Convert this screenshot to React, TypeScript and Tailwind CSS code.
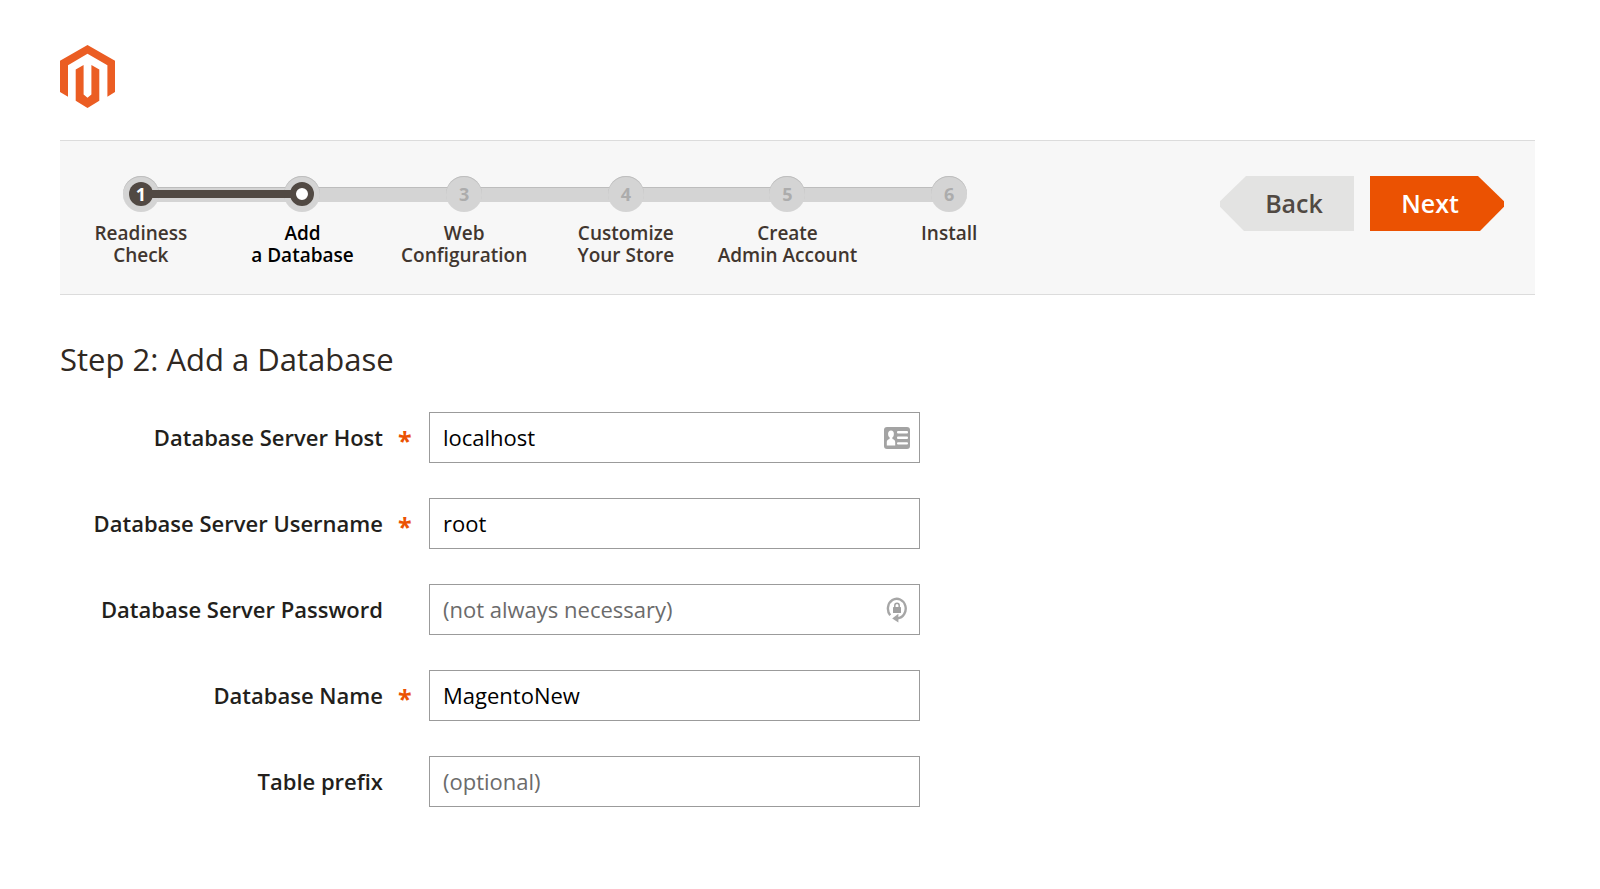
import clsx from "clsx";

const steps = [
  { id: 1, title: "Readiness\nCheck", state: "done" },
  { id: 2, title: "Add\na Database", state: "current" },
  { id: 3, title: "Web\nConfiguration", state: "todo" },
  { id: 4, title: "Customize\nYour Store", state: "todo" },
  { id: 5, title: "Create\nAdmin Account", state: "todo" },
  { id: 6, title: "Install", state: "todo" },
];

const fields = [
  { id: "db-host", label: "Database Server Host", required: true, value: "localhost", icon: ContactIcon },
  { id: "db-user", label: "Database Server Username", required: true, value: "root" },
  { id: "db-password", label: "Database Server Password", placeholder: "(not always necessary)", type: "password", icon: PasswordIcon },
  { id: "db-name", label: "Database Name", required: true, value: "MagentoNew" },
  { id: "db-prefix", label: "Table prefix", placeholder: "(optional)" },
];

function Logo() {
  return (
    <svg viewBox="0 0 55 63" className="h-[63px] w-[55px] fill-[#eb5d23]" role="img" aria-label="Magento">
      <path d="M27.5 0 55 15.7V47l-7.6 4.7V20.2L27.5 8.8 8 20.2v31.5L0 47V15.7Z" />
      <path d="M15.7 24.5 23.6 20v29.6l3.9 3.2 3.9-3.2V20l7.9 4.5v31.2L27.5 63l-11.8-7.3Z" />
    </svg>
  );
}

function ContactIcon() {
  return (
    <svg viewBox="0 0 26 22" className="h-[22px] w-[26px]" aria-hidden="true">
      <rect width="26" height="22" rx="3" fill="#a3a3a3" />
      <g fill="#fff">
        <ellipse cx="7" cy="7" rx="2.9" ry="3.6" />
        <path d="M5.6 9h2.8v3c2.2.6 2.8 1.6 2.8 3.4v3H2.8v-3c0-1.8.6-2.8 2.8-3.4Z" />
        <rect x="13" y="4" width="11" height="2.4" rx="1" />
        <rect x="13" y="9.6" width="11" height="2.4" rx="1" />
        <rect x="13" y="15.2" width="11" height="2.4" rx="1" />
      </g>
    </svg>
  );
}

function PasswordIcon() {
  return (
    <svg viewBox="0 0 22 26" className="mr-0.5 h-[26px] w-[22px]" aria-hidden="true">
      <path d="M4.2 18.2A8.9 9.8 0 1 1 11.5 21.4" fill="none" stroke="#a6a6a6" strokeWidth="2.4" />
      <path d="M6.2 21.4 12.4 16.8v8.8Z" fill="#a6a6a6" />
      <rect x="7" y="10" width="8" height="6" rx=".6" fill="#a0a0a0" />
      <path d="M8.8 10.4V8.6a2.2 2.4 0 0 1 4.4 0v1.8" fill="none" stroke="#a0a0a0" strokeWidth="1.5" />
    </svg>
  );
}

function StepMarker({ id, state }: { id: number; state: string }) {
  return (
    <span className="z-10 flex size-9 items-center justify-center rounded-full bg-[#d4d4d4] text-lg font-bold text-[#acacac] shadow-[inset_0_1px_0_#bdbdbd]">
      {state === "todo" && id}
      {state === "done" && (
        <span className="flex size-6 items-center justify-center rounded-full bg-[#514943] text-white">{id}</span>
      )}
      {state === "current" && <span className="size-6 rounded-full border-6 border-[#514943] bg-white" />}
    </span>
  );
}

function Progress() {
  return (
    <ol className="isolate grid w-full max-w-[970px] grid-cols-6">
      {steps.map((step, i) => (
        <li key={step.id} className="relative flex flex-col items-center">
          {/* track back to the previous marker */}
          {i > 0 && (
            <span className="absolute top-[11px] right-1/2 h-[15px] w-full bg-[#d4d4d4] shadow-[inset_0_1px_0_#bdbdbd]" />
          )}
          <StepMarker id={step.id} state={step.state} />
          {step.state === "current" && (
            <span className="absolute top-[14px] right-[calc(50%+10px)] z-20 h-2 w-[calc(100%-20px)] bg-[#514943]" />
          )}
          <span
            className={clsx(
              "mt-2.5 text-center text-[19px] leading-[22px] font-semibold whitespace-pre-line",
              step.state === "current" ? "text-black" : "text-[#41362f]"
            )}
          >
            {step.title}
          </span>
        </li>
      ))}
    </ol>
  );
}

export default function App() {
  return (
    <div className="min-h-screen bg-white pt-[45px] pr-[65px] pb-16 pl-[60px] font-['Open_Sans',sans-serif] text-[#41362f]">
      <header>
        <Logo />
      </header>

      <nav className="mt-8 flex min-h-[155px] items-start justify-between border-y border-[#dcdcdc] bg-[#f7f7f7] pt-[35px] pr-[31px]">
        <Progress />
        <div className="flex gap-4">
          <button className="h-[55px] w-[134px] bg-[#e3e3e2] pl-[14px] text-[25px] font-semibold text-[#514943] [clip-path:polygon(0_46%,26px_0,100%_0,100%_100%,24px_100%,0_56%)]">
            Back
          </button>
          <button className="h-[55px] w-[134px] bg-[#eb5202] pr-[14px] text-[25px] font-semibold text-white [clip-path:polygon(0_0,108px_0,100%_46%,100%_56%,110px_100%,0_100%)]">
            Next
          </button>
        </div>
      </nav>

      <main>
        <h1 className="mt-[43px] text-[31px] leading-[42px] text-[#302822]">Step 2: Add a Database</h1>
        <form className="mt-8 flex flex-col gap-[35px]">
          {fields.map(({ id, label, required, value, placeholder, type, icon: Icon }) => (
            <div key={id} className="flex items-center">
              <label htmlFor={id} className="w-[323px] pb-0.5 text-right text-[22px] leading-[30px] font-semibold text-[#231f1c]">
                {label}
              </label>
              <span className="w-[46px] pt-1 pl-[15px] text-[25px] leading-[30px] font-bold text-[#eb5202]">
                {required && "*"}
              </span>
              <div className="relative w-full max-w-[491px]">
                <input
                  id={id}
                  type={type ?? "text"}
                  defaultValue={value}
                  placeholder={placeholder}
                  className="h-[51px] w-full border border-[#9b9b9b] bg-white px-[13px] pb-0.5 text-[22px] text-black placeholder:text-[#6b6b6b]"
                />
                {Icon && (
                  <span className="absolute inset-y-0 right-[10px] flex items-center">
                    <Icon />
                  </span>
                )}
              </div>
            </div>
          ))}
        </form>
      </main>
    </div>
  );
}
